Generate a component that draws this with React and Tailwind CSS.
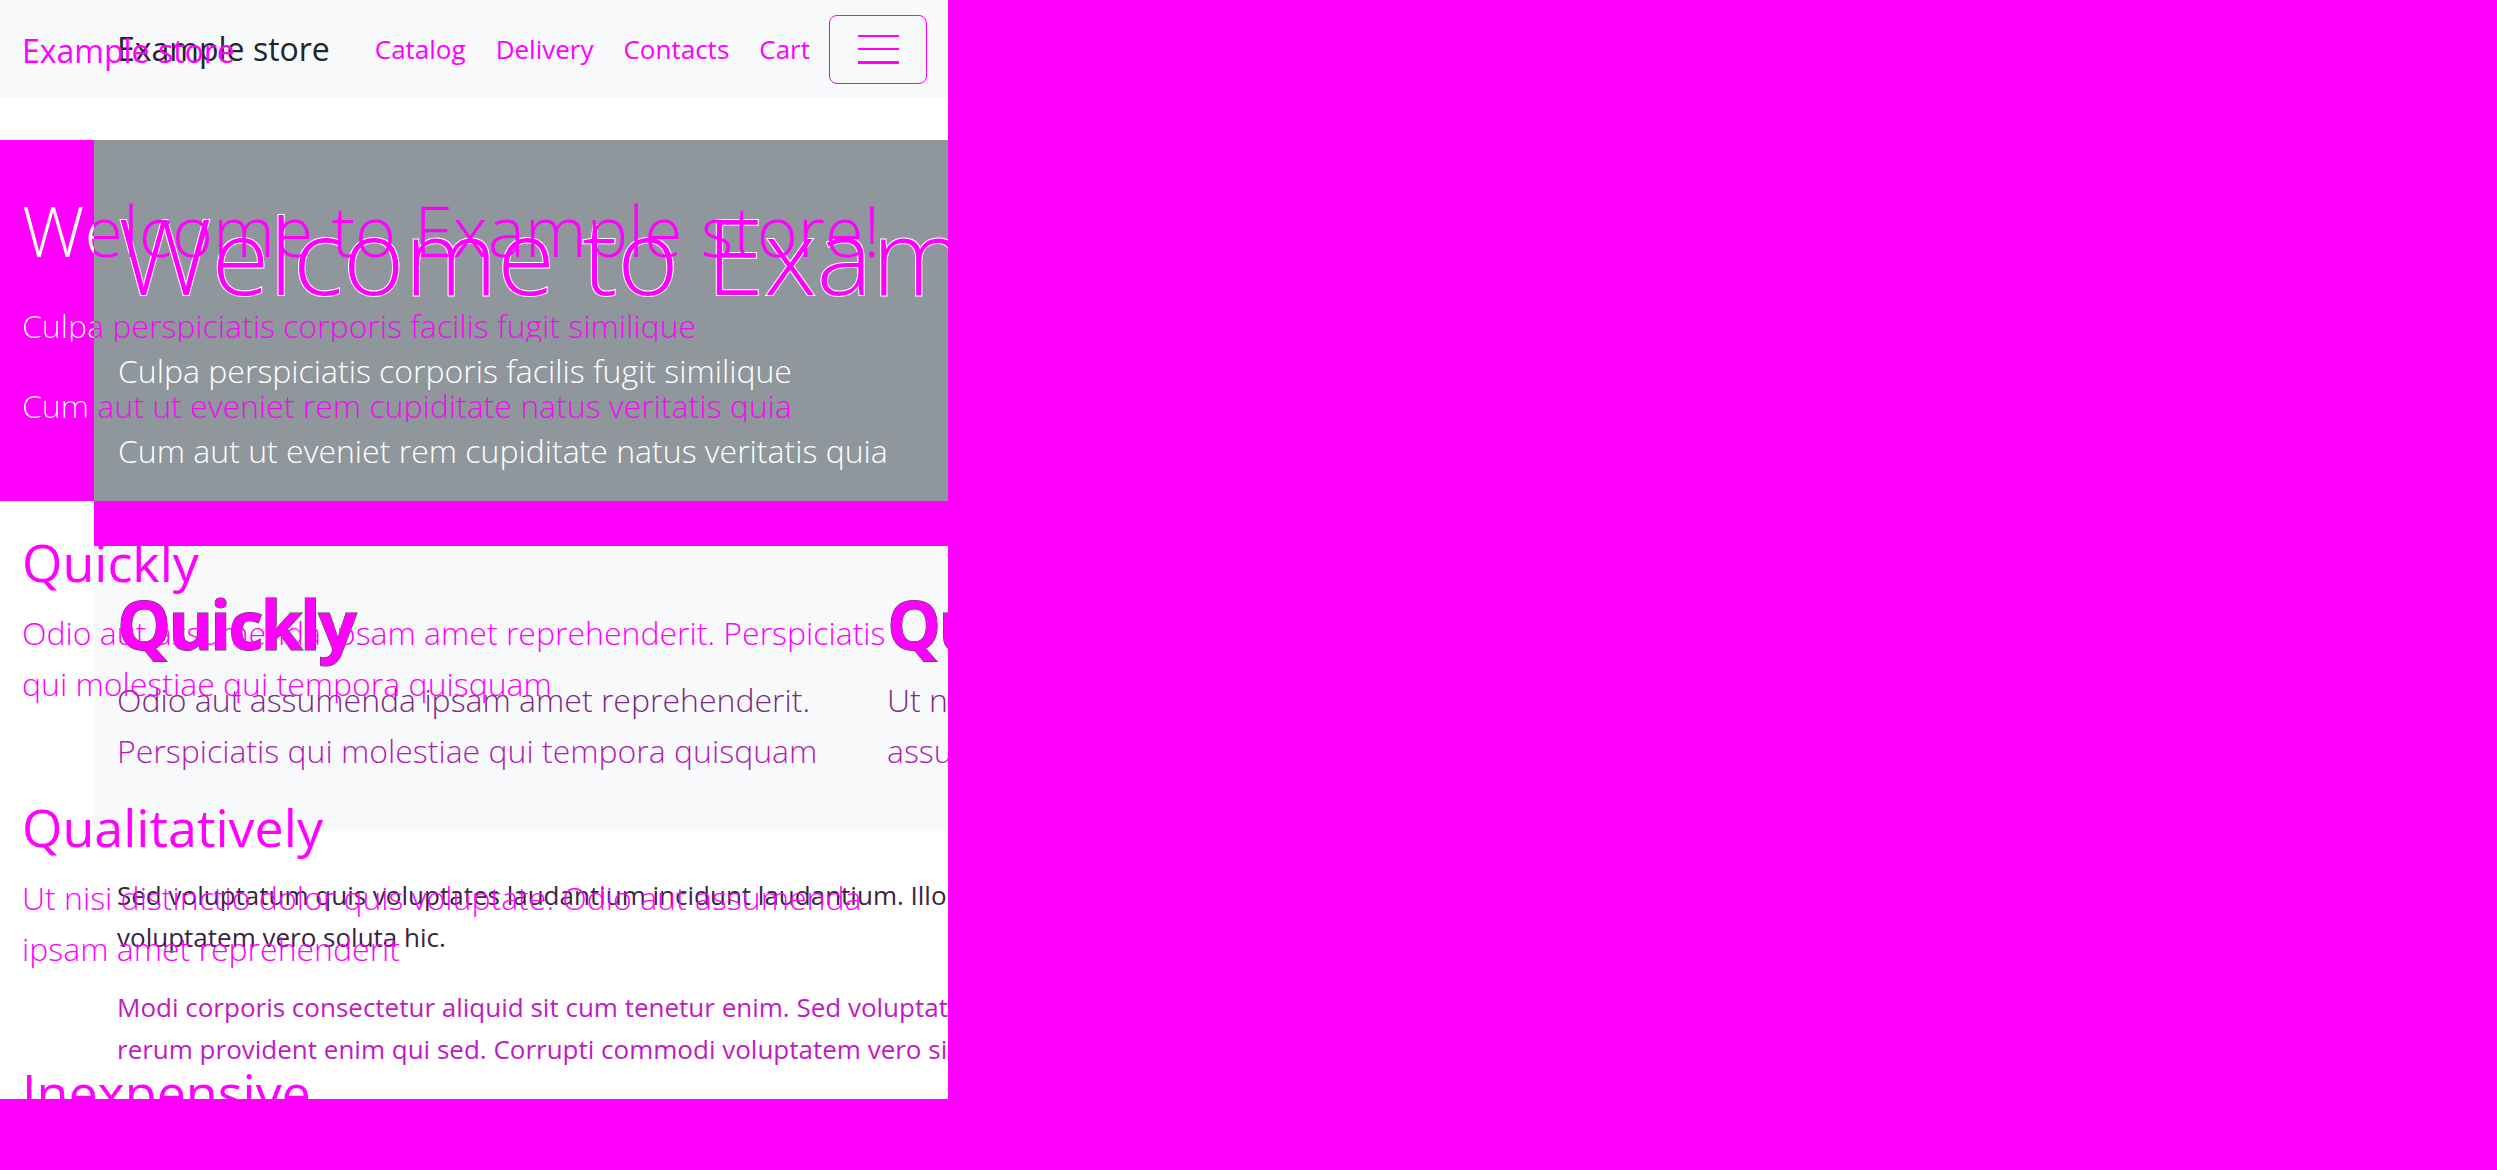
import React from 'react';

const font = "font-['Open_Sans','Noto_Sans',sans-serif]";

// the lower copy of the page (offset right)
function BackLayer() {
  return (
    <>
      <nav className="h-[98px] bg-[#f8f9fa] flex items-center pl-[117px] pr-[21px]">
        <span className="text-[32px] leading-none text-[#212529]">Example store</span>
        <div className="ml-auto flex items-center gap-[30px] text-[26px] leading-none text-[#f0f]">
          <span>Catalog</span>
          <span>Delivery</span>
          <span>Contacts</span>
          <span>Cart</span>
        </div>
        <button className="ml-[19px] w-[98px] h-[69px] border border-[#f0f] rounded-lg flex flex-col items-center justify-center gap-[11px]">
          <span className="block w-[41px] h-[2px] bg-[#f0f]"></span>
          <span className="block w-[41px] h-[2px] bg-[#f0f]"></span>
          <span className="block w-[41px] h-[3px] bg-[#f0f]"></span>
        </button>
      </nav>

      <div className="h-[42px]"></div>

      <section className="flex h-[361px]">
        <div className="w-[94px] shrink-0 bg-[#f0f]"></div>
        <div className="flex-1 min-w-0 overflow-hidden bg-[#8f969c] pl-[24px] pt-[62px] whitespace-nowrap">
          <h1 className="text-[105px] leading-none font-light text-[#f0f] [-webkit-text-stroke:2px_#fff] [paint-order:stroke_fill]">
            Welcome to Example store!
          </h1>
          <p className="mt-[48px] text-[32px] leading-none font-light text-white">Culpa perspiciatis corporis facilis fugit similique</p>
          <p className="mt-[48px] text-[32px] leading-none font-light text-white">Cum aut ut eveniet rem cupiditate natus veritatis quia</p>
        </div>
      </section>

      <div className="flex h-[45px]">
        <div className="w-[94px] shrink-0"></div>
        <div className="flex-1 bg-[#f0f]"></div>
      </div>

      <section className="ml-[94px] h-[285px] bg-[#f8f9fa] pl-[23px] pt-[44px] flex gap-[74px] whitespace-nowrap overflow-hidden">
        <div className="w-[696px] shrink-0">
          <h2 className="text-[68px] leading-none font-bold tracking-[-0.04em] text-[#f0f] [-webkit-text-stroke:1px_#3b3b3b] [paint-order:stroke_fill]">Quickly</h2>
          <p className="mt-[16px] text-[32px] leading-[51px] font-light text-[#7d2a83]">
            <span className="block">Odio aut assumenda ipsam amet reprehenderit.</span>
            <span className="block text-[#b21cb6]">Perspiciatis qui molestiae qui tempora quisquam</span>
          </p>
        </div>
        <div className="shrink-0">
          <h2 className="text-[68px] leading-none font-bold tracking-[-0.04em] text-[#f0f] [-webkit-text-stroke:1px_#3b3b3b] [paint-order:stroke_fill]">Quickly</h2>
          <p className="mt-[16px] text-[32px] leading-[51px] font-light text-[#7d2a83]">
            <span className="block">Ut nisi distinctio dolor quis voluptate. Odio aut</span>
            <span className="block text-[#b21cb6]">assumenda ipsam amet reprehenderit</span>
          </p>
        </div>
      </section>

      <section className="pl-[117px] pt-[43px] whitespace-nowrap text-[26px] leading-[42px]">
        <p className="text-[#3a2440]">
          <span className="block">Sed voluptatum quis voluptates laudantium incidunt laudantium. Illo quasi</span>
          <span className="block">voluptatem vero soluta hic.</span>
        </p>
        <p className="mt-[28px] text-[#c01ac4]">
          <span className="block">Modi corporis consectetur aliquid sit cum tenetur enim. Sed voluptates</span>
          <span className="block">rerum provident enim qui sed. Corrupti commodi voluptatem vero sint.</span>
        </p>
      </section>
    </>
  );
}

// the upper copy, drawn in magenta; white where it crosses the magenta strip
function FrontLayer() {
  const split = "bg-[linear-gradient(90deg,#fff_72px,#f0f_72px)] bg-clip-text text-transparent";
  return (
    <div className="absolute inset-0 pl-[22px] whitespace-nowrap pointer-events-none">
      <div className="pt-[35px] text-[32px] leading-none text-[#f0f]">Example store</div>
      <h1 className={`mt-[128px] w-fit text-[70px] leading-none font-light ${split}`}>Welcome to Example store!</h1>
      <p className={`mt-[45px] w-fit text-[32px] leading-none font-light ${split}`}>Culpa perspiciatis corporis facilis fugit similique</p>
      <p className={`mt-[48px] w-fit text-[32px] leading-none font-light ${split}`}>Cum aut ut eveniet rem cupiditate natus veritatis quia</p>

      <h2 className="mt-[114px] text-[52px] leading-none text-[#f0f]">Quickly</h2>
      <p className="mt-[19px] text-[32px] leading-[51px] font-light text-[#f0f]">
        <span className="block">Odio aut assumenda ipsam amet reprehenderit. Perspiciatis</span>
        <span className="block">qui molestiae qui tempora quisquam</span>
      </p>

      <h2 className="mt-[92px] text-[52px] leading-none text-[#f0f]">Qualitatively</h2>
      <p className="mt-[19px] text-[32px] leading-[51px] font-light text-[#f0f]">
        <span className="block">Ut nisi distinctio dolor quis voluptate. Odio aut assumenda</span>
        <span className="block">ipsam amet reprehenderit</span>
      </p>

      <h2 className="mt-[92px] text-[52px] leading-none text-[#f0f]">Inexpensive</h2>
    </div>
  );
}

export default function App() {
  return (
    <div className={`w-[2497px] h-[1170px] bg-[#f0f] ${font}`}>
      <div className="relative w-[948px] h-[1099px] bg-white overflow-hidden">
        <BackLayer />
        <FrontLayer />
      </div>
    </div>
  );
}
